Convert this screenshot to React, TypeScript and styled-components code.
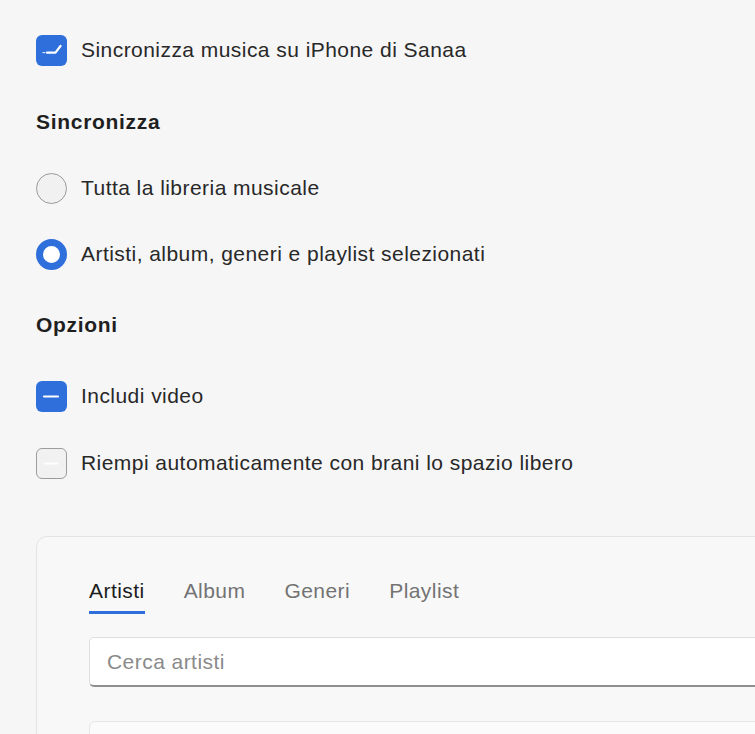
import React from "react";
import styled, { createGlobalStyle } from "styled-components";

const Global = createGlobalStyle`
  html, body { margin: 0; padding: 0; background: #f6f6f6; overflow: hidden; }
  body { font-family: "Liberation Sans", Arial, sans-serif; color: #262626; letter-spacing: 0.45px; }
`;

const Page = styled.div`
  display: flex;
  flex-direction: column;
  padding: 34px 0 0 36px;
  height: 734px;
  overflow: hidden;
  box-sizing: border-box;
`;

const Row = styled.label<{ $mt?: number }>`
  display: flex;
  align-items: center;
  gap: 14px;
  height: 32px;
  flex: none;
  margin-top: ${(p) => p.$mt ?? 0}px;
  font-size: 21px;
  color: #282828;
`;

const Heading = styled.h2<{ $mt: number }>`
  margin: ${(p) => p.$mt}px 0 0 0;
  font-size: 21px;
  line-height: 24px;
  font-weight: 700;
  letter-spacing: 0.7px;
  color: #1f1f1f;
  flex: none;
`;

const Box = styled.span<{ $on: boolean }>`
  width: 31px;
  height: 31px;
  box-sizing: border-box;
  border-radius: 6px;
  flex: none;
  display: flex;
  align-items: center;
  justify-content: center;
  background: ${(p) => (p.$on ? "#2f6fdc" : "#f1f1f1")};
  border: ${(p) => (p.$on ? "none" : "1.5px solid #9c9c9c")};
`;

const Radio = styled.span<{ $on: boolean }>`
  width: 31px;
  height: 31px;
  box-sizing: border-box;
  border-radius: 50%;
  flex: none;
  background: ${(p) => (p.$on ? "#fff" : "#f1f1f1")};
  border: ${(p) => (p.$on ? "7px solid #2f6fdc" : "1.5px solid #9a9a9a")};
`;

const Panel = styled.section`
  margin-top: 57px;
  margin-right: -30px;
  border: 1px solid #e4e4e4;
  border-radius: 11px;
  background: #f8f8f8;
  padding: 42px 0 0 52px;
  flex: none;
  height: 300px;
`;

const Tabs = styled.div`
  display: flex;
  gap: 39px;
`;

const Tab = styled.div<{ $active?: boolean }>`
  font-size: 21px;
  line-height: 24px;
  padding-bottom: 8px;
  color: ${(p) => (p.$active ? "#1c1c1c" : "#737373")};
  border-bottom: 3px solid ${(p) => (p.$active ? "#2f6fdc" : "transparent")};
`;

const Search = styled.div`
  margin-top: 23px;
  height: 50px;
  box-sizing: border-box;
  background: #fff;
  border: 1px solid #dedede;
  border-bottom: 2px solid #8f8f8f;
  border-radius: 5px;
  display: flex;
  align-items: center;
  padding-left: 17px;
  font-size: 21px;
  color: #8a8a8a;
`;

const ListBox = styled.div`
  margin-top: 34px;
  height: 60px;
  background: #fbfbfb;
  border: 1px solid #e6e6e6;
  border-radius: 6px;
`;

const Check = () => (
  <svg width="31" height="31" viewBox="0 0 31 31">
    <path d="M7 17.6 L8.8 17.6" stroke="#fff" strokeWidth="1.4" strokeLinecap="round" fill="none" opacity="0.8" />
    <path d="M11 17.7 L19.5 17.7 L24.5 11" stroke="#fff" strokeWidth="2.2" strokeLinecap="round" strokeLinejoin="round" fill="none" />
  </svg>
);

const Dash = ({ faint }: { faint?: boolean }) => (
  <svg width="31" height="31" viewBox="0 0 31 31">
    <path d="M8 15.5 L22 15.5" stroke="#fff" strokeWidth="2.2" strokeLinecap="round" opacity={faint ? 0.9 : 1} />
  </svg>
);

export default function App() {
  return (
    <>
      <Global />
      <Page>
        <Row>
          <Box $on><Check /></Box>
          Sincronizza musica su iPhone di Sanaa
        </Row>
        <Heading $mt={44}>Sincronizza</Heading>
        <Row $mt={38}>
          <Radio $on={false} />
          Tutta la libreria musicale
        </Row>
        <Row $mt={34}>
          <Radio $on />
          Artisti, album, generi e playlist selezionati
        </Row>
        <Heading $mt={43}>Opzioni</Heading>
        <Row $mt={43}>
          <Box $on><Dash /></Box>
          Includi video
        </Row>
        <Row $mt={35}>
          <Box $on={false}><Dash faint /></Box>
          Riempi automaticamente con brani lo spazio libero
        </Row>
        <Panel>
          <Tabs>
            <Tab $active>Artisti</Tab>
            <Tab>Album</Tab>
            <Tab>Generi</Tab>
            <Tab>Playlist</Tab>
          </Tabs>
          <Search>Cerca artisti</Search>
          <ListBox />
        </Panel>
      </Page>
    </>
  );
}
